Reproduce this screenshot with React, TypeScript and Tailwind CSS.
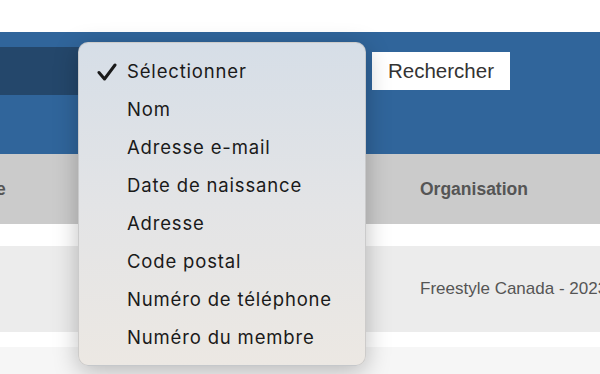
const options = [
  "Sélectionner",
  "Nom",
  "Adresse e-mail",
  "Date de naissance",
  "Adresse",
  "Code postal",
  "Numéro de téléphone",
  "Numéro du membre",
];

function CheckMark() {
  return (
    <svg width="20" height="18" viewBox="0 0 20 18" fill="none">
      <path d="M2 9.5 L7.5 16 L18 2" stroke="#1a1a1a" strokeWidth="3" strokeLinecap="round" strokeLinejoin="round" />
    </svg>
  );
}

export default function App() {
  return (
    <div className="relative w-[600px] h-[374px] overflow-hidden bg-white font-['Liberation_Sans',Arial,sans-serif]">
      {/* Top white strip */}
      <div className="h-[32px] bg-white" />

      {/* Search band */}
      <div className="h-[122px] bg-[#30659b] flex items-start">
        <div className="mt-[15px] w-[90px] h-[48px] bg-[#24476b]" />
        <div className="ml-[282px] mt-[20px] w-[138px] h-[38px] bg-white flex items-center justify-center text-[20.5px] text-[#333]">
          Rechercher
        </div>
      </div>

      {/* Table header */}
      <div className="h-[70px] bg-[#cbcbcb] flex items-center">
        <span className="ml-[-4px] w-[424px] text-[17.5px] font-bold text-[#555]">e</span>
        <span className="text-[17.5px] font-bold text-[#555]">Organisation</span>
      </div>
      <div className="h-[22px] bg-white" />
      <div className="h-[86px] bg-[#ececec] flex items-center">
        <span className="ml-[420px] whitespace-nowrap text-[17px] text-[#555]">Freestyle Canada - 2023</span>
      </div>
      <div className="h-[15px] bg-white" />
      <div className="h-[27px] bg-[#f6f6f6]" />

      {/* Native select menu */}
      <div className="absolute left-[78px] top-[42px] w-[288px] h-[324px] rounded-[10px] border border-[#b9b9b9]/60 bg-gradient-to-b from-[#d6dee7] via-[#e3e4e6] to-[#ece8e3] shadow-[0_6px_24px_rgba(0,0,0,0.25)] pt-[10px] font-['Inter',sans-serif]">
        {options.map((o, i) => (
          <div key={o} className="h-[38px] flex items-center">
            <div className="w-[48px] pl-[18px] flex items-center">
              {i === 0 && <CheckMark />}
            </div>
            <span className="text-[18.5px] tracking-[0.045em] text-[#1a1a1a]">{o}</span>
          </div>
        ))}
      </div>
    </div>
  );
}
